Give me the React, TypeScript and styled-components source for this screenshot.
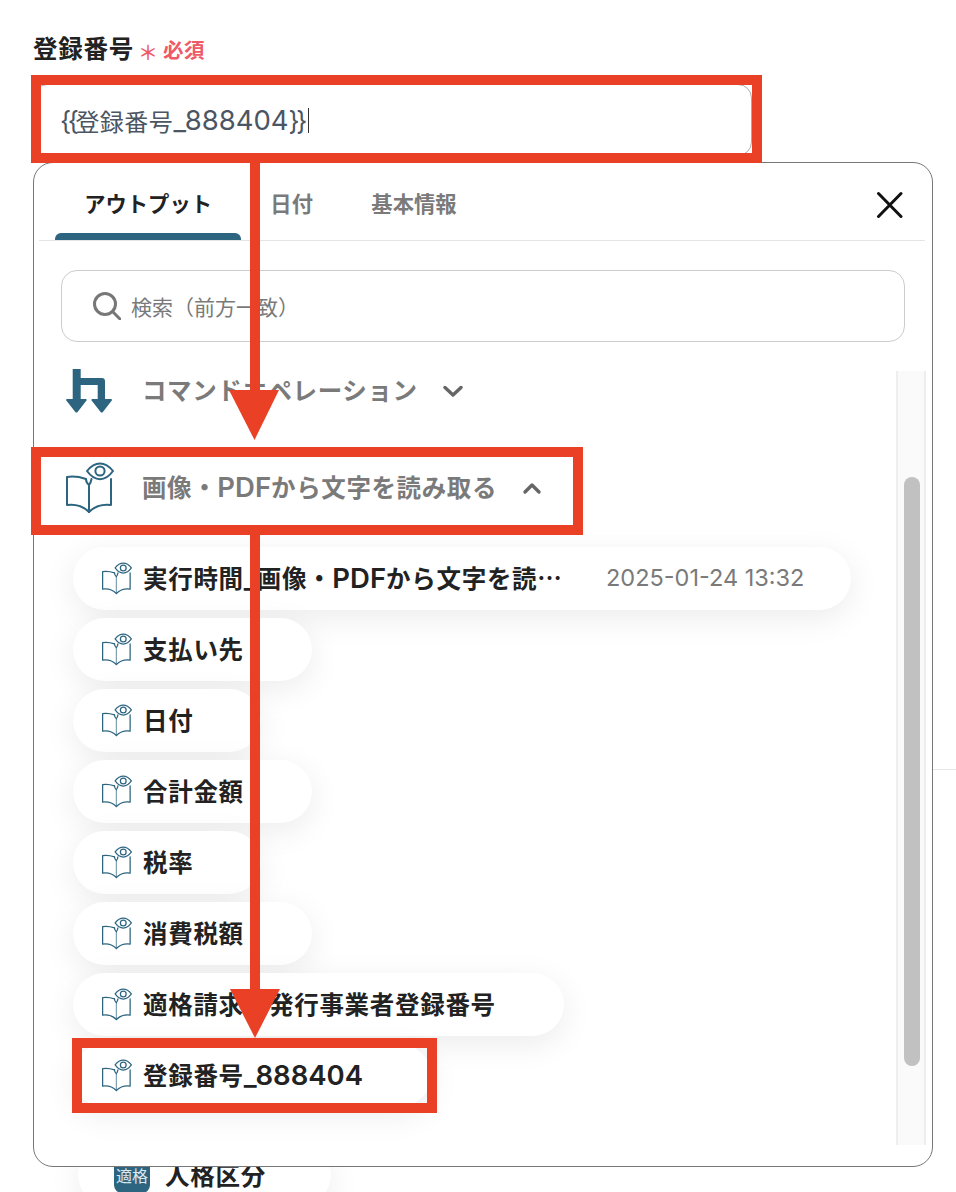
import React from "react";
import styled, { createGlobalStyle } from "styled-components";

const Global = createGlobalStyle`
  html, body { margin: 0; padding: 0; background: #fff; }
  * { box-sizing: border-box; }
`;

const FONT = `"Noto Sans CJK JP", Inter, sans-serif`;
const TEAL = "#2d6580";
const RED = "#ea4025";

const Page = styled.div`
  position: relative;
  width: 956px;
  height: 1192px;
  overflow: hidden;
  background: #fff;
  padding: 35px 0 0 33px;
  font-family: ${FONT};
  text-spacing-trim: space-all;
`;
const Latin = styled.span`
  font-family: Inter, sans-serif;
  font-size: 27.5px;
  font-weight: 600;
  letter-spacing: 0;
`;
const InputLatin = styled.span`
  font-family: Inter, sans-serif;
  font-size: 27.5px;
  font-weight: 400;
  letter-spacing: 0;
`;
const Brace = styled.span`
  font-family: Inter, sans-serif;
  font-size: 26px;
  font-weight: 400;
  letter-spacing: -3.4px;
`;
const LabelRow = styled.div`
  display: flex;
  align-items: center;
  height: 28px;
  margin-bottom: 21px;
`;
const LabelText = styled.span`
  font-size: 24.5px;
  line-height: 28px;
  font-weight: 700;
  letter-spacing: 0.75px;
  color: #222;
  position: relative;
  top: -1px;
`;
const Star = styled.span`
  font-size: 20px;
  line-height: 28px;
  font-weight: 500;
  color: #ee5a66;
  margin: 6px 5px 0 4px;
`;
const Required = styled.span`
  font-size: 20.5px;
  line-height: 28px;
  font-weight: 700;
  letter-spacing: 0.5px;
  color: #ee5a66;
`;
const InputWrap = styled.div`
  position: relative;
  width: 719px;
  height: 72px;
`;
const InputBox = styled.div`
  display: flex;
  align-items: center;
  height: 100%;
  border: 1px solid #aaa;
  border-radius: 14px;
  padding-left: 26px;
  font-size: 24px;
  letter-spacing: 0.5px;
  color: #4b5563;
  white-space: pre;
`;
const Caret = styled.span`
  display: inline-block;
  width: 1px;
  height: 25px;
  background: #333;
  margin-left: 4px;
`;
const Divider = styled.div`
  height: 1px;
  background: #e6e6e6;
  margin-top: 613px;
`;
const BackPill = styled.div`
  display: inline-flex;
  align-items: center;
  gap: 15px;
  height: 63px;
  margin: 373px 0 0 45px;
  padding: 0 65px 0 36px;
  border-radius: 32px;
  background: #fff;
  box-shadow: 0 8px 32px rgba(0, 0, 0, 0.08);
  font-size: 24.5px;
  font-weight: 700;
  letter-spacing: 0.75px;
  color: #222;
`;
const Tag = styled.span`
  display: flex;
  align-items: center;
  justify-content: center;
  width: 36px;
  height: 36px;
  border-radius: 8px;
  background: ${TEAL};
  color: #dbe8ee;
  font-size: 16px;
  font-weight: 400;
  letter-spacing: 0;
`;
const Popup = styled.div`
  position: absolute;
  top: 78px;
  left: 0;
  width: 900px;
  height: 1005px;
  display: flex;
  flex-direction: column;
  background: #fff;
  border: 1px solid #777;
  border-radius: 20px;
  z-index: 1;
`;
const Tabs = styled.div`
  display: flex;
  align-items: stretch;
  height: 78px;
  flex: none;
  margin: 0 7px 0 5px;
  padding: 0 22px 0 16px;
  border-bottom: 1px solid #e5e5e5;
`;
const Tab = styled.div<{ $active?: boolean }>`
  position: relative;
  display: flex;
  align-items: center;
  padding: 2px 29.2px 0;
  font-size: 21.3px;
  font-weight: 700;
  color: ${(p) => (p.$active ? "#222" : "#7a7a7a")};
  &::after {
    content: "";
    display: ${(p) => (p.$active ? "block" : "none")};
    position: absolute;
    left: 0;
    right: 0;
    bottom: 0;
    height: 7px;
    border-radius: 6px 6px 0 0;
    background: ${TEAL};
  }
`;
const Close = styled.div`
  display: flex;
  align-items: center;
  margin: 7px 0 0 auto;
`;
const Search = styled.div`
  flex: none;
  display: flex;
  align-items: center;
  gap: 10px;
  height: 72px;
  margin: 29px 27px;
  padding: 0 0 0 31px;
  border: 1px solid #ccc;
  border-radius: 16px;
  font-size: 21px;
  color: #7a7a7a;
`;
const Body = styled.div`
  flex: none;
  display: flex;
  height: 774px;
  margin-right: 6px;
`;
const List = styled.div`
  flex: 1;
  min-width: 0;
  display: flex;
  flex-direction: column;
  align-items: flex-start;
`;
const Track = styled.div`
  flex: none;
  width: 30px;
  padding: 106px 0 0 6px;
  background: #fafafa;
  border-left: 2px solid #eee;
  border-right: 2px solid #eee;
`;
const Thumb = styled.div`
  width: 16px;
  height: 589px;
  border-radius: 8px;
  background: #c1c1c1;
`;
const GroupHeader = styled.div<{ $mb: number }>`
  position: relative;
  flex: none;
  display: flex;
  align-items: center;
  height: 40px;
  margin: ${(p) => `0 0 ${p.$mb}px 32px`};
  font-size: 24.5px;
  font-weight: 700;
  letter-spacing: 0.6px;
  color: #7a7a7a;
  white-space: pre;
`;
const GroupIcon = styled.span`
  display: flex;
  justify-content: flex-start;
  width: 48px;
  margin-right: 28px;
`;
const GroupName = styled.span`
  display: block;
  line-height: 36px;
  margin-top: -3px;
`;
const Chevron = styled.svg`
  margin-left: 25px;
  flex: none;
`;
const Pill = styled.div<{ $pr?: number }>`
  position: relative;
  flex: none;
  display: inline-flex;
  align-items: center;
  height: 63px;
  margin: 0 0 8px 39px;
  padding: 0 ${(p) => p.$pr ?? 68}px 0 29px;
  border-radius: 32px;
  background: #fff;
  box-shadow: 0 8px 32px rgba(0, 0, 0, 0.08);
  font-size: 24.5px;
  font-weight: 700;
  letter-spacing: 0.7px;
  color: #222;
  white-space: pre;
`;
const PillIcon = styled.span`
  display: flex;
  width: 30px;
  margin-right: 11px;
`;
const PillName = styled.span<{ $w?: number }>`
  display: block;
  width: ${(p) => (p.$w ? `${p.$w}px` : "auto")};
  line-height: 36px;
  margin-top: -1px;
`;
const PillValue = styled.span`
  margin-left: 43px;
  font-family: Inter, sans-serif;
  font-size: 23.5px;
  font-weight: 400;
  letter-spacing: 0;
  color: #7a7a7a;
  margin-top: -2px;
`;
const Highlight = styled.div<{ $t: number; $l: number; $w: number; $h: number }>`
  position: absolute;
  top: ${(p) => p.$t}px;
  left: ${(p) => p.$l}px;
  width: ${(p) => p.$w}px;
  height: ${(p) => p.$h}px;
  border: 10px solid ${RED};
  z-index: 3;
  pointer-events: none;
`;
const ArrowLayer = styled.svg`
  position: absolute;
  top: 0;
  left: 0;
  z-index: 4;
  pointer-events: none;
`;

const BookEye = ({ w, h, sw }: { w: number; h: number; sw: number }) => (
  <svg width={w} height={h} viewBox="0 0 48 52" fill="none" stroke={TEAL} strokeWidth={sw} strokeLinejoin="round" strokeLinecap="round">
    <path d="M20 17C14 15 7 14 1 15V43C9 42 17 44 23 50C29 44 37 42 45 43V17" />
    <path d="M23 23C20 20.500 20 18 20 17" />
    <path d="M23 23V50" strokeOpacity={w < 40 ? 0.6 : 1} />
    <path d="M23 23C24 22 25 20 25.500 17" />
    <path d="M21 9C29 -1 39 -1 47 9C39 20 29 20 21 9Z" fill="#fff" />
    <circle cx="34" cy="9" r="4.600" />
  </svg>
);

const Branch = () => (
  <svg width="46" height="46" viewBox="0 0 46 46" fill={TEAL}>
    <path d="M6.700 1H14.700V10H36C37.800 10 39 11.200 39 13V33H31.700V17H14.700V33H6.700Z" />
    <path d="M1.200 31H19.500C20.600 31 21 32 20.300 32.800L11.600 44C11 44.800 9.900 44.800 9.300 44L0.500 32.800C-0.200 32 0.200 31 1.200 31Z" />
    <path d="M26.500 31H44.800C45.900 31 46.300 32 45.600 32.800L36.900 44C36.300 44.800 35.200 44.800 34.600 44L25.800 32.800C25.100 32 25.500 31 26.500 31Z" />
  </svg>
);

const fields = ["支払い先", "日付", "合計金額", "税率", "消費税額", "適格請求書発行事業者登録番号"];

export default function App() {
  return (
    <Page>
      <Global />
      <LabelRow>
        <LabelText>登録番号</LabelText>
        <Star>＊</Star>
        <Required>必須</Required>
      </LabelRow>
      <InputWrap>
        <InputBox>
          <Brace>{"{{"}</Brace>
          登録番号
          <InputLatin>_888404</InputLatin>
          <Brace>{"}}"}</Brace>
          <Caret />
        </InputBox>
        <Highlight $t={-9} $l={-2} $w={731} $h={88} />
        <Popup>
          <Tabs>
            <Tab $active>アウトプット</Tab>
            <Tab>日付</Tab>
            <Tab>基本情報</Tab>
            <Close>
              <svg width="28" height="28" viewBox="0 0 28 28" stroke="#111" strokeWidth="3" strokeLinecap="round">
                <path d="M3.500 2.500L26 25.500M26 2.500L3.500 25.500" />
              </svg>
            </Close>
          </Tabs>
          <Search>
            <svg width="28" height="28" viewBox="0 0 28 28" fill="none" stroke="#777" strokeWidth="3" strokeLinecap="round">
              <circle cx="12" cy="12" r="10.500" />
              <path d="M20 20L27 27" />
            </svg>
            検索（前方一致）
          </Search>
          <Body>
            <List>
              <GroupHeader $mb={57}>
                <GroupIcon><Branch /></GroupIcon>
                <GroupName>コマンドオペレーション</GroupName>
                <Chevron width="20" height="14" viewBox="0 0 20 14" fill="none" stroke="#666" strokeWidth="3.400" strokeLinecap="round" strokeLinejoin="round">
                  <path d="M2 3.500L10 11L18 3.500" />
                </Chevron>
              </GroupHeader>
              <GroupHeader $mb={39}>
                <GroupIcon><BookEye w={48} h={52} sw={2} /></GroupIcon>
                <GroupName>画像・<Latin>PDF</Latin>から文字を読み取る</GroupName>
                <Chevron width="20" height="14" viewBox="0 0 20 14" fill="none" stroke="#666" strokeWidth="3.400" strokeLinecap="round" strokeLinejoin="round">
                  <path d="M3 11L10 4L17 11" />
                </Chevron>
                <Highlight $t={-21} $l={-35} $w={552} $h={88} />
              </GroupHeader>
              <Pill $pr={47}>
                <PillIcon><BookEye w={30} h={33} sw={2} /></PillIcon>
                <PillName $w={420}>実行時間<Latin>_</Latin>画像・<Latin>PDF</Latin>から文字を読…</PillName>
                <PillValue>2025-01-24 13:32</PillValue>
              </Pill>
              {fields.map((f) => (
                <Pill key={f}>
                  <PillIcon><BookEye w={30} h={33} sw={2} /></PillIcon>
                  <PillName>{f}</PillName>
                </Pill>
              ))}
              <Pill>
                <PillIcon><BookEye w={30} h={33} sw={2} /></PillIcon>
                <PillName>登録番号<Latin>_888404</Latin></PillName>
                <Highlight $t={-6} $l={-1} $w={365} $h={75} />
              </Pill>
            </List>
            <Track><Thumb /></Track>
          </Body>
        </Popup>
      </InputWrap>
      <Divider />
      <BackPill>
        <Tag>適格</Tag>
        人格区分
      </BackPill>
      <ArrowLayer width="956" height="1192" viewBox="0 0 956 1192" fill={RED}>
        <rect x="250" y="163" width="10" height="232" />
        <path d="M229 390H279L254.500 440Z" />
        <rect x="250" y="535" width="10" height="460" />
        <path d="M230 989H280L255 1038Z" />
      </ArrowLayer>
    </Page>
  );
}
